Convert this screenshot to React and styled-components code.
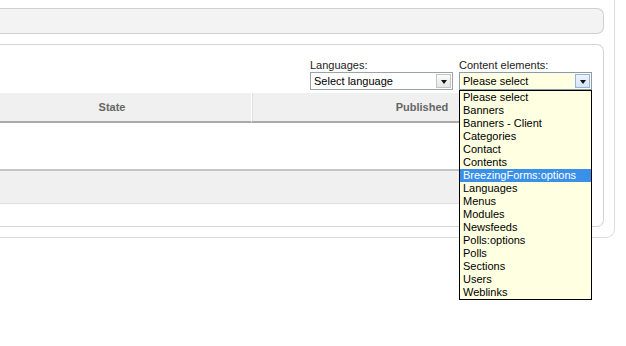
import React from "react";
import styled, { createGlobalStyle } from "styled-components";

const Global = createGlobalStyle`
  html, body { margin: 0; padding: 0; background: #fff; }
  body { min-height: 346px; font-family: "Liberation Sans", Arial, sans-serif; font-size: 11px; color: #000; }
  * { box-sizing: border-box; }
`;

const Outer = styled.div`
  margin: -10px 0 0 -20px;
  width: 635px;
  border: 1px solid #dcdcdc;
  border-top: none;
  border-radius: 0 0 9px 9px;
  padding: 18px 10px 10px 0;
`;

const TopBar = styled.div`
  height: 26px;
  background: #f3f3f3;
  border: 1px solid #cfcfcf;
  border-left: none;
  border-radius: 0 7px 7px 0;
`;

const Panel = styled.div`
  margin-top: 10px;
  height: 183px;
  border: 1px solid #d4d4d4;
  border-left: none;
  border-radius: 0 7px 7px 0;
  padding: 14px 11px 0 0;
`;

const Filters = styled.div`
  display: flex;
  justify-content: flex-end;
  gap: 6px;
`;

const Field = styled.div`
  display: flex;
  flex-direction: column;
  position: relative;
`;

const Label = styled.label`
  font-size: 11px;
  line-height: 13px;
  color: #222;
`;

const SelectBox = styled.div`
  display: flex;
  align-items: center;
  width: ${(p) => p.$w}px;
  height: 18px;
  border: 1px solid ${(p) => (p.$active ? "#8a9bb0" : "#9aa2aa")};
  background: ${(p) => (p.$active ? "#ffffe1" : "#fff")};
  padding: 0 1px 0 3px;
  font-size: 11px;
  line-height: 16px;
`;

const SelectText = styled.span`
  flex: 1;
  white-space: nowrap;
`;

const Arrow = styled.span`
  width: 15px;
  height: 14px;
  display: flex;
  align-items: center;
  justify-content: center;
  border: 1px solid ${(p) => (p.$active ? "#97b3dc" : "#c4c4c4")};
  background: ${(p) => (p.$active ? "linear-gradient(#eef4fd, #d6e3f7)" : "linear-gradient(#fbfbfb, #e6e6e6)")};
  &::after {
    content: "";
    border-left: 3.5px solid transparent;
    border-right: 3.5px solid transparent;
    border-top: 4px solid #111;
    margin-top: 1px;
  }
`;

const List = styled.ul`
  position: absolute;
  top: 100%;
  left: 0;
  width: 133px;
  margin: 0;
  padding: 0;
  list-style: none;
  background: #ffffe1;
  border: 1px solid #000;
  z-index: 10;
`;

const Item = styled.li`
  height: 13px;
  line-height: 13px;
  padding-left: 3px;
  font-size: 11px;
  white-space: nowrap;
  background: ${(p) => (p.$selected ? "#3a8fe8" : "transparent")};
  color: ${(p) => (p.$selected ? "#fff" : "#000")};
`;

const Table = styled.div`
  margin: 3px 0 0 -8px;
  display: grid;
  grid-template-columns: 278px 1fr;
`;

const HeadCell = styled.div`
  height: 30px;
  background: #f0f0f0;
  border-bottom: 2px solid #aaaaaa;
  border-left: ${(p) => (p.$sep ? "1px solid #fff" : "none")};
  box-shadow: ${(p) => (p.$sep ? "inset 1px 0 0 #e0e0e0" : "none")};
  display: flex;
  align-items: center;
  justify-content: center;
  font-weight: bold;
  font-size: 11px;
  color: #666;
`;

const EmptyRow = styled.div`
  grid-column: 1 / -1;
  height: 46px;
  background: #fff;
`;

const FootRow = styled.div`
  grid-column: 1 / -1;
  height: 35px;
  background: #f0f0f0;
  border-top: 2px solid #c4c4c4;
  border-bottom: 1px solid #dedede;
`;

const items = [
  "Please select",
  "Banners",
  "Banners - Client",
  "Categories",
  "Contact",
  "Contents",
  "BreezingForms:options",
  "Languages",
  "Menus",
  "Modules",
  "Newsfeeds",
  "Polls:options",
  "Polls",
  "Sections",
  "Users",
  "Weblinks",
];

export default function App() {
  return (
    <>
      <Global />
      <Outer>
        <TopBar />
        <Panel>
          <Filters>
            <Field>
              <Label>Languages:</Label>
              <SelectBox $w={143}>
                <SelectText>Select language</SelectText>
                <Arrow />
              </SelectBox>
            </Field>
            <Field>
              <Label>Content elements:</Label>
              <SelectBox $w={133} $active>
                <SelectText>Please select</SelectText>
                <Arrow $active />
              </SelectBox>
              <List>
                {items.map((it) => (
                  <Item key={it} $selected={it === "BreezingForms:options"}>
                    {it}
                  </Item>
                ))}
              </List>
            </Field>
          </Filters>
          <Table>
            <HeadCell>State</HeadCell>
            <HeadCell $sep>Published</HeadCell>
            <EmptyRow />
            <FootRow />
          </Table>
        </Panel>
      </Outer>
    </>
  );
}
